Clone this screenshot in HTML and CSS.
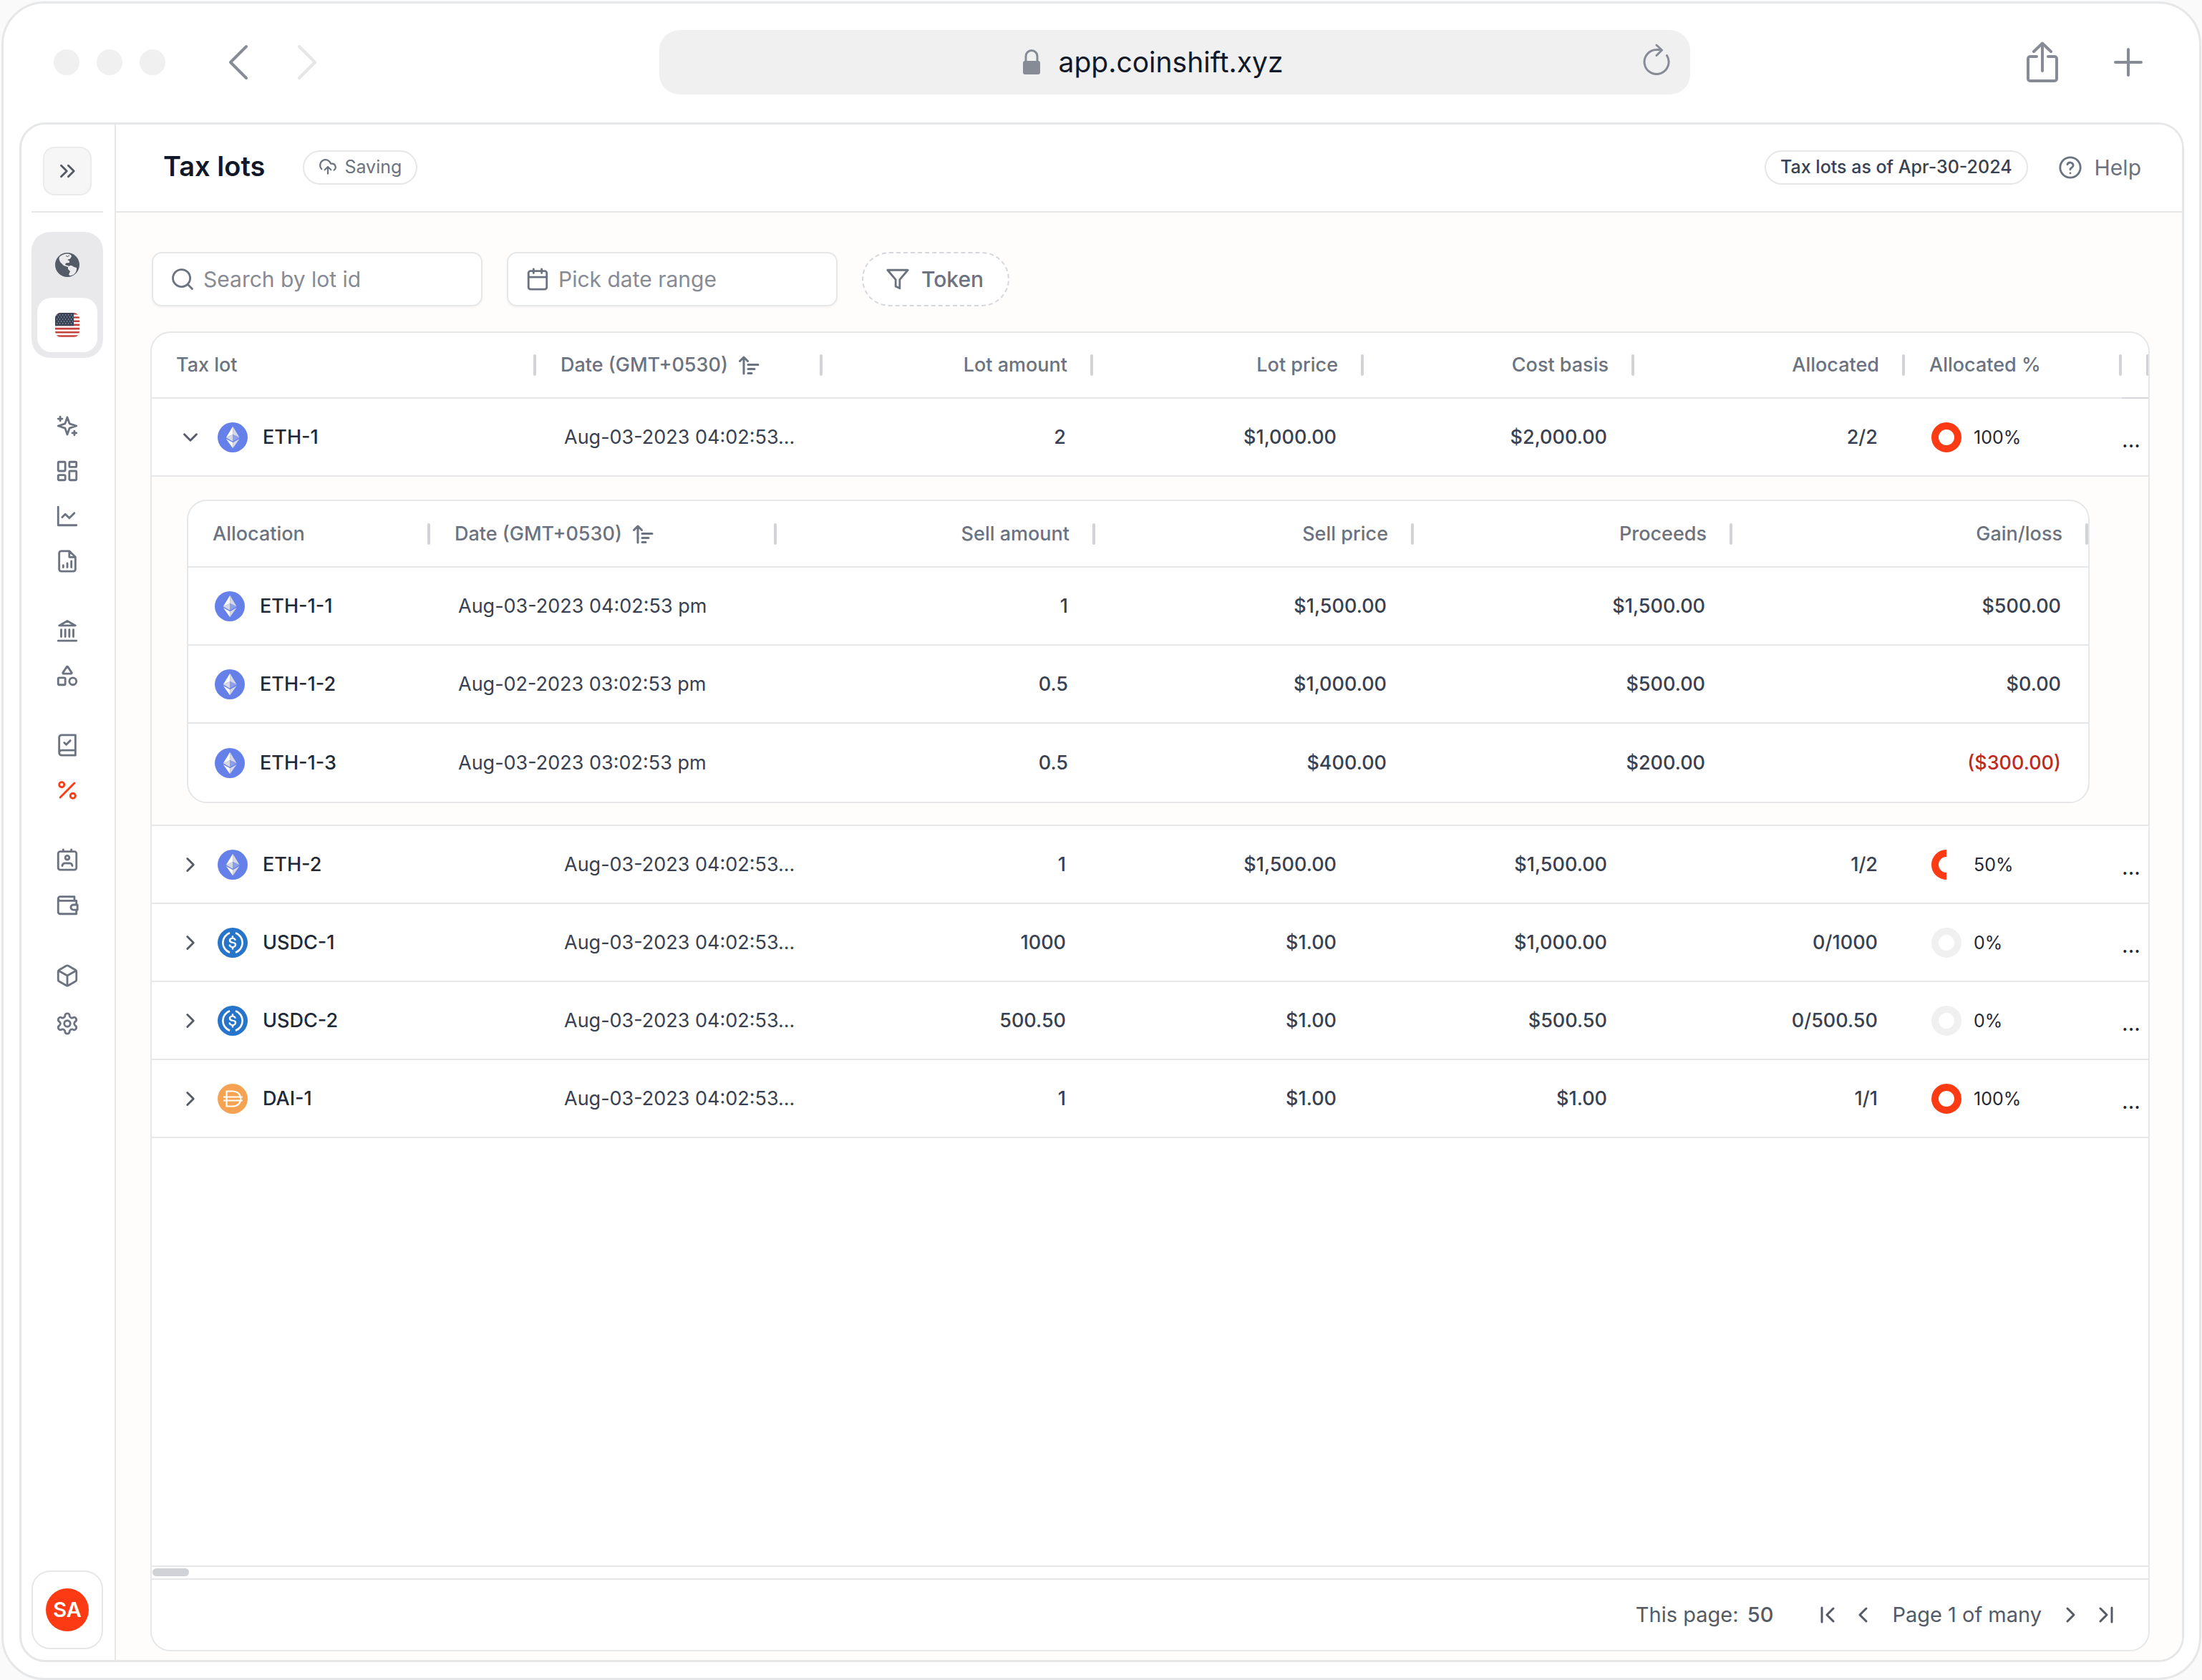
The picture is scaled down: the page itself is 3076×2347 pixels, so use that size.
FILE: index.html
```html
<!DOCTYPE html>
<html lang="en">
<head>
<meta charset="utf-8">
<meta name="viewport" content="width=device-width, initial-scale=1">
<title>Tax lots</title>
<link rel="stylesheet" href="styles.css">
</head>
<body>
<svg class="sprite" aria-hidden="true">
  <symbol id="eth" viewBox="0 0 32 32">
    <circle cx="16" cy="16" r="16" fill="#6680e9"/>
    <path fill="#fff" d="M16.2 4.400 9 16.200l7.200-3.300zM16.200 27.600v-6L9 17.500z"/>
    <path fill="#d5d8e6" d="M16.200 4.400v8.500l7.100 3.300zM16.200 27.600v-6l7.100-4.100zM9 16.200l7.200 4.200v-7.500z"/>
    <path fill="#8f9fe9" d="m16.200 20.400 7.100-4.200-7.100-3.300z"/>
  </symbol>
  <symbol id="usdc" viewBox="0 0 32 32">
    <circle cx="16" cy="16" r="16" fill="#2775ca"/>
    <path fill="#fff" d="M20.022 18.124c0-2.124-1.28-2.852-3.84-3.156-1.828-.243-2.193-.728-2.193-1.578 0-.85.61-1.396 1.828-1.396 1.097 0 1.707.364 2.011 1.275a.458.458 0 00.427.303h.975a.416.416 0 00.427-.425v-.06a3.04 3.04 0 00-2.743-2.489V9.142c0-.243-.183-.425-.487-.486h-.915c-.243 0-.426.182-.487.486v1.396c-1.829.242-2.986 1.456-2.986 2.974 0 2.002 1.218 2.791 3.778 3.095 1.707.303 2.255.668 2.255 1.639 0 .97-.853 1.638-2.011 1.638-1.585 0-2.133-.667-2.316-1.578-.06-.242-.244-.364-.427-.364h-1.036a.416.416 0 00-.426.425v.06c.243 1.518 1.219 2.610 3.230 2.914v1.457c0 .242.183.425.487.485h.915c.243 0 .426-.182.487-.485V21.340c1.829-.303 3.047-1.578 3.047-3.217z"/>
    <path fill="none" stroke="#fff" stroke-width="2" d="M13 5.600a11 11 0 0 0 0 20.800M19 5.600a11 11 0 0 1 0 20.800"/>
  </symbol>
  <symbol id="dai" viewBox="0 0 32 32">
    <circle cx="16" cy="16" r="16" fill="#f5a352"/>
    <path fill="none" stroke="#fff" stroke-width="1.700" d="M9.500 8h6.500c5.500 0 8.500 3.500 8.500 8s-3 8-8.500 8H9.500zM6.200 14.100h20.300M6.200 17.900h20.300"/>
  </symbol>
  <symbol id="chev-right" viewBox="0 0 24 24"><path d="m9 6 6 6-6 6"/></symbol>
  <symbol id="chev-down" viewBox="0 0 24 24"><path d="m6 9 6 6 6-6"/></symbol>
  <symbol id="sort" viewBox="0 0 30 28"><path d="M8 26V3M2.500 8.500 8 3l5.500 5.500M14 13.500h14M14 19.500h9M14 25.500h5"/></symbol>
  <symbol id="ring-full" viewBox="0 0 42 42"><circle cx="21" cy="21" r="16" fill="none" stroke="#fc3b14" stroke-width="10"/></symbol>
  <symbol id="ring-half" viewBox="0 0 42 42"><path d="M21 5a16 16 0 0 0 0 32" fill="none" stroke="#fc3b14" stroke-width="10"/></symbol>
  <symbol id="ring-none" viewBox="0 0 42 42"><circle cx="21" cy="21" r="16" fill="none" stroke="#f0f0f0" stroke-width="10"/></symbol>
</svg>

<div class="window">
  <header class="chrome">
    <div class="chrome-side">
      <div class="lights"><span></span><span></span><span></span></div>
      <button class="bare" aria-label="Back"><svg class="nav-arrow" viewBox="0 0 28 50"><path d="M25 3 3 25l22 22"/></svg></button>
      <button class="bare" aria-label="Forward" disabled><svg class="nav-arrow" viewBox="0 0 28 50"><path d="m3 3 22 22L3 47"/></svg></button>
    </div>
    <div class="address">
      <svg class="lock" viewBox="0 0 26 36"><path d="M5 17V9.500a8 8 0 0 1 16 0V17" fill="none" stroke="#868b95" stroke-width="3"/><rect x="1" y="16" width="24" height="19" rx="3" fill="#868b95"/></svg>
      <span>app.coinshift.xyz</span>
      <button class="bare reload" aria-label="Reload"><svg viewBox="0 0 38 44"><path d="M33.500 16.500A17 17 0 1 1 19 8.500h6M19 2l7.500 7-7.500 7.500"/></svg></button>
    </div>
    <div class="chrome-side end">
      <button class="bare" aria-label="Share"><svg class="share" viewBox="0 0 44 58"><path d="M14 21H5a3 3 0 0 0-3 3v28a3 3 0 0 0 3 3h34a3 3 0 0 0 3-3V24a3 3 0 0 0-3-3h-9M22 41V3M10 14 22 2.500 34 14"/></svg></button>
      <button class="bare" aria-label="New tab"><svg class="plus" viewBox="0 0 40 40"><path d="M20 2v36M2 20h36"/></svg></button>
    </div>
  </header>

  <div class="app">
    <aside class="sidebar">
      <div class="side-top">
        <button class="collapse" aria-label="Expand menu"><svg class="icon" viewBox="0 0 24 24"><path d="m6 17.500 5.500-5.500L6 6.500M13 17.500l5.500-5.500L13 6.500"/></svg></button>
      </div>
      <div class="switcher">
        <button class="bare" aria-label="Global"><svg viewBox="0 0 34 34"><circle cx="17" cy="17" r="17" fill="#545b66"/><path fill="#ebebed" d="M6 6c3-3 7-4.500 11-4.500 3 0 5.500 1.500 6 3.500l-2 3.500-4 1.500 3 1.500v2.500l-5 .5-1 2.500 5 1.500-1 1.500-6-2-5-5-1.500-4zM18 20c2-2 4-2.500 6-1.500 1.500 1 3 2 6 2.500.5 3-1 7-3.500 9-2 1.500-4 2-6 2L19 30.500l2-4.500-3-3z"/><path stroke="#545b66" stroke-width="1" d="m15 4 2 1.500L20 4"/></svg></button>
        <button class="bare active" aria-label="United States"><svg viewBox="0 0 34 34"><defs><clipPath id="flag-clip"><rect width="34" height="34" rx="8"/></clipPath></defs><g clip-path="url(#flag-clip)"><rect width="34" height="34" fill="#fff"/><path stroke="#c8403a" stroke-width="2.600" d="M0 1.300h34M0 6.500h34M0 11.700h34M0 16.900h34M0 22.100h34M0 27.300h34M0 32.500h34"/><rect width="26" height="18.200" fill="#394457"/><path stroke="#c3c7cf" stroke-width="1.200" stroke-dasharray="1.200 2.800" d="M2 3h23M4 6h21M2 9h23M4 12h21M2 15h23"/></g></svg></button>
      </div>
      <nav class="menu" aria-label="Main">
        <div class="menu-group">
          <a href="#" aria-label="Assistant"><svg class="icon" viewBox="0 0 24 24"><path d="M12 3.500 9.800 9.800 3 12l6.800 2.200L12 20.500l2.200-6.300L21 12l-6.800-2.200zM5 3v4M3 5h4M19 17v4M17 19h4"/></svg></a>
          <a href="#" aria-label="Dashboard"><svg class="icon" viewBox="0 0 24 24"><rect x="3" y="3" width="7" height="9" rx="1"/><rect x="14" y="3" width="7" height="5" rx="1"/><rect x="14" y="12" width="7" height="9" rx="1"/><rect x="3" y="16" width="7" height="5" rx="1"/></svg></a>
          <a href="#" aria-label="Analytics"><svg class="icon" viewBox="0 0 24 24"><path d="M3 3v18h18M7 13l3-3 4 4 5-5"/></svg></a>
          <a href="#" aria-label="Reports"><svg class="icon" viewBox="0 0 24 24"><path d="M14 2H6a2 2 0 0 0-2 2v16a2 2 0 0 0 2 2h12a2 2 0 0 0 2-2V8zM14 2v6h6M8 18v-2M12 18v-4M16 18v-6"/></svg></a>
        </div>
        <div class="menu-group">
          <a href="#" aria-label="Treasury"><svg class="icon" viewBox="0 0 24 24"><path d="M3 22h18M6 18v-7M10 18v-7M14 18v-7M18 18v-7M12 2.500l8 4.500H4z"/></svg></a>
          <a href="#" aria-label="Assets"><svg class="icon" viewBox="0 0 24 24"><path d="M8.300 10a.7.7 0 0 1-.6-1.100l3.700-5.600a.7.7 0 0 1 1.200 0l3.700 5.600a.7.7 0 0 1-.6 1.100z"/><rect x="3" y="14" width="7" height="7" rx="1"/><circle cx="17.500" cy="17.500" r="3.500"/></svg></a>
        </div>
        <div class="menu-group">
          <a href="#" aria-label="Accounting"><svg class="icon" viewBox="0 0 24 24"><path d="M4 19.500v-15A2.500 2.500 0 0 1 6.500 2H20v20H6.500a2.500 2.500 0 0 1 0-5H20M9 9.500l2 2 4-4"/></svg></a>
          <a href="#" class="current" aria-label="Tax lots" aria-current="page"><svg class="icon" viewBox="0 0 24 24"><path d="M19 5 5 19"/><circle cx="6.500" cy="6.500" r="2.500"/><circle cx="17.500" cy="17.500" r="2.500"/></svg></a>
        </div>
        <div class="menu-group">
          <a href="#" aria-label="Contacts"><svg class="icon" viewBox="0 0 24 24"><path d="M8 2v2M16 2v2M7 18a3 3 0 0 1 3-2.500h4a3 3 0 0 1 3 2.500"/><rect x="3" y="4" width="18" height="18" rx="2"/><circle cx="12" cy="10" r="2"/></svg></a>
          <a href="#" aria-label="Wallets"><svg class="icon" viewBox="0 0 24 24"><path d="M19 7V4H5a2 2 0 0 0 0 4h16v4M3 6v13a2 2 0 0 0 2 2h16v-4M18 12a2 2 0 0 0 0 5h4v-5z"/></svg></a>
        </div>
        <div class="menu-group wide">
          <a href="#" aria-label="Integrations"><svg class="icon" viewBox="0 0 24 24"><path d="M21 8a2 2 0 0 0-1-1.700l-7-4a2 2 0 0 0-2 0l-7 4A2 2 0 0 0 3 8v8a2 2 0 0 0 1 1.700l7 4a2 2 0 0 0 2 0l7-4a2 2 0 0 0 1-1.700zM3.300 7l8.700 5 8.700-5M12 22V12"/></svg></a>
          <a href="#" aria-label="Settings"><svg class="icon" viewBox="0 0 24 24"><path d="M12.220 2h-.44a2 2 0 0 0-2 2v.18a2 2 0 0 1-1 1.730l-.43.25a2 2 0 0 1-2 0l-.15-.08a2 2 0 0 0-2.730.73l-.22.38a2 2 0 0 0 .73 2.730l.15.1a2 2 0 0 1 1 1.720v.51a2 2 0 0 1-1 1.740l-.15.09a2 2 0 0 0-.73 2.730l.22.38a2 2 0 0 0 2.730.73l.15-.08a2 2 0 0 1 2 0l.43.25a2 2 0 0 1 1 1.730V20a2 2 0 0 0 2 2h.44a2 2 0 0 0 2-2v-.18a2 2 0 0 1 1-1.730l.43-.25a2 2 0 0 1 2 0l.15.08a2 2 0 0 0 2.730-.73l.22-.39a2 2 0 0 0-.73-2.730l-.15-.08a2 2 0 0 1-1-1.740v-.5a2 2 0 0 1 1-1.740l.15-.09a2 2 0 0 0 .73-2.730l-.22-.38a2 2 0 0 0-2.730-.73l-.15.08a2 2 0 0 1-2 0l-.43-.25a2 2 0 0 1-1-1.730V4a2 2 0 0 0-2-2z"/><circle cx="12" cy="12" r="3"/></svg></a>
        </div>
      </nav>
      <button class="account" aria-label="Account"><span>SA</span></button>
    </aside>

    <main class="main">
      <div class="page-head">
        <h1>Tax lots</h1>
        <span class="pill saving"><svg viewBox="0 0 24 24"><path d="M4 14.900A7 7 0 1 1 15.700 8h1.800a4.500 4.500 0 0 1 2.500 8.200M12 12v9M8 16l4-4 4 4"/></svg>Saving</span>
        <span class="pill as-of">Tax lots as of Apr-30-2024</span>
        <a class="help" href="#"><svg class="icon" viewBox="0 0 24 24"><circle cx="12" cy="12" r="10"/><path d="M9.100 9a3 3 0 0 1 5.800 1c0 2-3 2.500-3 4M12 17.500v.1"/></svg>Help</a>
      </div>

      <div class="content">
        <div class="filters">
          <label class="field"><svg class="icon" viewBox="0 0 24 24"><circle cx="11" cy="11" r="8.500"/><path d="m21.500 21.500-4.400-4.400"/></svg><input type="text" placeholder="Search by lot id" aria-label="Search by lot id"></label>
          <label class="field"><svg class="icon" viewBox="0 0 24 24"><rect x="3" y="4" width="18" height="18" rx="2"/><path d="M8 2v4M16 2v4M3 10h18"/></svg><input type="text" placeholder="Pick date range" aria-label="Pick date range"></label>
          <button class="token"><svg class="icon" viewBox="0 0 24 24"><path d="M22 3H2l8 9.500V19l4 2v-8.500z"/></svg>Token</button>
        </div>

        <section class="card">
          <div class="table-scroll">
            <table class="lots">
              <colgroup><col><col class="c-date"><col class="c-num"><col class="c-num"><col class="c-num"><col class="c-num"><col class="c-pct"><col class="c-more"></colgroup>
              <thead>
                <tr>
                  <th><div class="th">Tax lot</div></th>
                  <th><div class="th">Date (GMT+0530)<svg class="sort"><use href="#sort"/></svg></div></th>
                  <th><div class="th num">Lot amount</div></th>
                  <th><div class="th num">Lot price</div></th>
                  <th><div class="th num">Cost basis</div></th>
                  <th><div class="th num">Allocated</div></th>
                  <th><div class="th">Allocated %</div></th>
                  <th class="more-head"><div class="th"></div></th>
                </tr>
              </thead>
              <tbody>
                <tr>
                  <td><div class="lot"><button class="bare" aria-label="Collapse ETH-1"><svg class="icon"><use href="#chev-down"/></svg></button><svg class="coin"><use href="#eth"/></svg>ETH-1</div></td>
                  <td class="date">Aug-03-2023 04:02:53...</td><td class="num">2</td><td class="num">$1,000.00</td><td class="num">$2,000.00</td><td class="num">2/2</td>
                  <td><div class="pct"><svg class="coin"><use href="#ring-full"/></svg>100%</div></td>
                  <td><button class="bare more" aria-label="More">...</button></td>
                </tr>
                <tr class="detail">
                  <td colspan="8">
                    <div class="sub-card">
                      <table>
                        <colgroup><col><col class="s-date"><col class="s-num"><col class="s-num"><col class="s-num"><col class="s-last"></colgroup>
                        <thead>
                          <tr>
                            <th><div class="th">Allocation</div></th>
                            <th><div class="th">Date (GMT+0530)<svg class="sort"><use href="#sort"/></svg></div></th>
                            <th><div class="th num">Sell amount</div></th>
                            <th><div class="th num">Sell price</div></th>
                            <th><div class="th num">Proceeds</div></th>
                            <th><div class="th num">Gain/loss</div></th>
                          </tr>
                        </thead>
                        <tbody>
                          <tr><td><div class="lot"><svg class="coin"><use href="#eth"/></svg>ETH-1-1</div></td><td class="date">Aug-03-2023 04:02:53 pm</td><td class="num">1</td><td class="num">$1,500.00</td><td class="num">$1,500.00</td><td class="num">$500.00</td></tr>
                          <tr><td><div class="lot"><svg class="coin"><use href="#eth"/></svg>ETH-1-2</div></td><td class="date">Aug-02-2023 03:02:53 pm</td><td class="num">0.5</td><td class="num">$1,000.00</td><td class="num">$500.00</td><td class="num">$0.00</td></tr>
                          <tr><td><div class="lot"><svg class="coin"><use href="#eth"/></svg>ETH-1-3</div></td><td class="date">Aug-03-2023 03:02:53 pm</td><td class="num">0.5</td><td class="num">$400.00</td><td class="num">$200.00</td><td class="num loss">($300.00)</td></tr>
                        </tbody>
                      </table>
                    </div>
                  </td>
                </tr>
                <tr>
                  <td><div class="lot"><button class="bare" aria-label="Expand ETH-2"><svg class="icon"><use href="#chev-right"/></svg></button><svg class="coin"><use href="#eth"/></svg>ETH-2</div></td>
                  <td class="date">Aug-03-2023 04:02:53...</td><td class="num">1</td><td class="num">$1,500.00</td><td class="num">$1,500.00</td><td class="num">1/2</td>
                  <td><div class="pct"><svg class="coin"><use href="#ring-half"/></svg>50%</div></td>
                  <td><button class="bare more" aria-label="More">...</button></td>
                </tr>
                <tr>
                  <td><div class="lot"><button class="bare" aria-label="Expand USDC-1"><svg class="icon"><use href="#chev-right"/></svg></button><svg class="coin"><use href="#usdc"/></svg>USDC-1</div></td>
                  <td class="date">Aug-03-2023 04:02:53...</td><td class="num">1000</td><td class="num">$1.00</td><td class="num">$1,000.00</td><td class="num">0/1000</td>
                  <td><div class="pct"><svg class="coin"><use href="#ring-none"/></svg>0%</div></td>
                  <td><button class="bare more" aria-label="More">...</button></td>
                </tr>
                <tr>
                  <td><div class="lot"><button class="bare" aria-label="Expand USDC-2"><svg class="icon"><use href="#chev-right"/></svg></button><svg class="coin"><use href="#usdc"/></svg>USDC-2</div></td>
                  <td class="date">Aug-03-2023 04:02:53...</td><td class="num">500.50</td><td class="num">$1.00</td><td class="num">$500.50</td><td class="num">0/500.50</td>
                  <td><div class="pct"><svg class="coin"><use href="#ring-none"/></svg>0%</div></td>
                  <td><button class="bare more" aria-label="More">...</button></td>
                </tr>
                <tr>
                  <td><div class="lot"><button class="bare" aria-label="Expand DAI-1"><svg class="icon"><use href="#chev-right"/></svg></button><svg class="coin"><use href="#dai"/></svg>DAI-1</div></td>
                  <td class="date">Aug-03-2023 04:02:53...</td><td class="num">1</td><td class="num">$1.00</td><td class="num">$1.00</td><td class="num">1/1</td>
                  <td><div class="pct"><svg class="coin"><use href="#ring-full"/></svg>100%</div></td>
                  <td><button class="bare more" aria-label="More">...</button></td>
                </tr>
              </tbody>
            </table>
          </div>
          <div class="track"><div class="thumb"></div></div>
          <footer class="pager">
            <p class="page-size">This page: <strong>50</strong></p>
            <div class="pages">
              <button class="bare" aria-label="First page"><svg viewBox="0 0 20 24"><path d="M2 2v20M18 3 9 12l9 9"/></svg></button>
              <button class="bare" aria-label="Previous page"><svg viewBox="0 0 20 24"><path d="m14 3-9 9 9 9"/></svg></button>
              <span>Page 1 of many</span>
              <button class="bare" aria-label="Next page"><svg viewBox="0 0 20 24"><path d="m6 3 9 9-9 9"/></svg></button>
              <button class="bare" aria-label="Last page"><svg viewBox="0 0 20 24"><path d="M18 2v20M2 3l9 9-9 9"/></svg></button>
            </div>
          </footer>
        </section>
      </div>
    </main>
  </div>
</div>
</body>
</html>
```
FILE: styles.css
```css
:root {
  --line: #e6e7e9;
  --muted: #6b7280;
  --text: #374151;
  --strong: #1f2937;
  --grey: #868b95;
  --accent: #fc3b14;
  --paper: #fefdfb;
}

*, *::before, *::after { box-sizing: border-box; }

body {
  margin: 0;
  min-height: 100vh;
  padding: 2px 1px 0 2px;
  display: flex;
  background: #fafafa;
  font-family: Inter, "Liberation Sans", sans-serif;
  font-size: 27px;
  line-height: 36px;
  color: var(--text);
}

h1, p { margin: 0; }
button, input { font: inherit; color: inherit; }
svg { display: block; fill: none; flex: none; }

.sprite { position: absolute; width: 0; height: 0; }

.bare {
  border: 0;
  padding: 0;
  background: none;
  cursor: pointer;
}

.icon {
  width: 34px;
  height: 34px;
  stroke: currentColor;
  stroke-width: 2;
  stroke-linecap: round;
  stroke-linejoin: round;
}

/* Browser window */
.window {
  flex: 1;
  min-width: 0;
  display: flex;
  flex-direction: column;
  padding: 0 21px 22px 22px;
  border: 3px solid var(--line);
  border-radius: 60px;
  background: #fff;
}

.chrome {
  height: 166px;
  display: grid;
  grid-template-columns: 894fr 1440fr 690fr;
  align-items: center;
  padding-bottom: 2px;
  color: var(--grey);
}

.chrome-side {
  display: flex;
  align-items: center;
  gap: 68px;
  padding-left: 48px;
}
.chrome-side.end {
  justify-content: flex-end;
  gap: 78px;
  padding: 0 58px 0 0;
}

.lights { display: flex; gap: 24px; margin-right: 20px; }
.lights span { width: 36px; height: 36px; border-radius: 50%; background: #f0f0f0; }

.chrome svg {
  stroke: currentColor;
  stroke-width: 4;
  stroke-linecap: round;
  stroke-linejoin: round;
}
.chrome [disabled] { color: #e5e6e8; }
.nav-arrow { width: 28px; height: 50px; }
.share { width: 44px; height: 58px; }
.plus { width: 40px; height: 40px; }

.address {
  position: relative;
  height: 90px;
  display: flex;
  align-items: center;
  justify-content: center;
  gap: 25px;
  padding-right: 62px;
  border-radius: 28px;
  background: #f0f0f0;
  font-size: 39px;
  line-height: 48px;
  color: #111827;
}
.address .lock { width: 26px; height: 36px; stroke: none; }
.reload { position: absolute; right: 28px; padding-bottom: 8px; color: var(--grey); }
.reload svg { width: 38px; height: 44px; stroke-width: 3; }

/* Application frame */
.app {
  flex: 1;
  display: flex;
  border: 3px solid var(--line);
  border-radius: 36px;
  overflow: hidden;
}

.sidebar {
  width: 132px;
  flex: none;
  display: flex;
  flex-direction: column;
  padding: 0 16px 15px 14px;
  border-right: 2px solid var(--line);
  color: var(--muted);
}

.side-top {
  height: 123px;
  display: flex;
  justify-content: center;
  align-items: center;
  padding: 12px 0 4px;
  border-bottom: 2px solid var(--line);
}

.collapse {
  width: 68px;
  height: 68px;
  padding: 0;
  display: grid;
  place-items: center;
  border: 2px solid #ebebec;
  border-radius: 16px;
  background: #f6f6f6;
  color: #545b66;
}

.switcher {
  margin-top: 27px;
  padding: 8px;
  display: grid;
  gap: 8px;
  border-radius: 26px;
  background: #e9e9eb;
}
.switcher button {
  height: 76px;
  display: grid;
  place-items: center;
  border-radius: 20px;
}
.switcher .active { background: #fff; }
.switcher svg { width: 34px; height: 34px; }

.menu {
  margin: 63px 0 auto;
  display: grid;
  gap: 34px;
}
.menu a {
  height: 63px;
  display: grid;
  place-items: center;
  color: inherit;
}
.menu .wide a { height: 67px; }
.menu .current { color: var(--accent); }

.account {
  height: 110px;
  padding: 0;
  display: grid;
  place-items: center;
  border: 2px solid var(--line);
  border-radius: 26px;
  background: #fff;
}
.account span {
  width: 60px;
  height: 60px;
  display: grid;
  place-items: center;
  border-radius: 50%;
  background: var(--accent);
  color: #fff;
  font-size: 29px;
  font-weight: 600;
}

/* Page */
.main {
  flex: 1;
  min-width: 0;
  display: flex;
  flex-direction: column;
  background: var(--paper);
}

.page-head {
  height: 123px;
  display: flex;
  align-items: center;
  padding: 0 57px 2px 66px;
  border-bottom: 2px solid var(--line);
  background: #fff;
}
.page-head h1 {
  padding-bottom: 4px;
  font-size: 38px;
  line-height: 48px;
  font-weight: 600;
  color: #111827;
}

.pill {
  height: 48px;
  display: flex;
  align-items: center;
  gap: 10px;
  padding: 0 20px 2px;
  border: 2px solid var(--line);
  border-radius: 24px;
  font-size: 25px;
  font-weight: 500;
}
.saving { margin-left: 53px; color: var(--muted); font-weight: 400; }
.saving svg {
  width: 26px;
  height: 26px;
  stroke: currentColor;
  stroke-width: 2;
  stroke-linecap: round;
  stroke-linejoin: round;
}
.as-of { margin-left: auto; }

.help {
  display: flex;
  align-items: center;
  gap: 17px;
  margin-left: 42px;
  font-size: 30px;
  color: var(--muted);
  text-decoration: none;
}

.content {
  flex: 1;
  display: flex;
  flex-direction: column;
  gap: 35px;
  padding: 55px 45px 12px 48px;
}

.filters { display: flex; gap: 34px; padding: 0 2px; font-size: 30px; }
.field, .token {
  height: 76px;
  display: flex;
  align-items: center;
  border: 2px solid var(--line);
  background: #fff;
  color: var(--muted);
}
.field {
  width: 462px;
  gap: 12px;
  padding: 0 24px;
  border-radius: 14px;
  box-shadow: 0 2px 3px rgba(17, 24, 39, .04);
}
.field input {
  flex: 1;
  min-width: 0;
  border: 0;
  padding: 0;
  outline: 0;
  background: none;
}
.field input::placeholder { color: var(--grey); opacity: 1; }
.token {
  gap: 16px;
  padding: 0 34px 0 31px;
  border: 2px dashed #d5d7dc;
  border-radius: 38px;
  font-weight: 500;
}

/* Table card */
.card {
  flex: 1;
  display: flex;
  flex-direction: column;
  border: 2px solid var(--line);
  border-radius: 28px;
  background: #fff;
  overflow: hidden;
}
.table-scroll { flex: 1; overflow: hidden; }

table {
  width: 100%;
  table-layout: fixed;
  border-collapse: separate;
  border-spacing: 0;
}
.c-date { width: 400px; }
.c-num { width: 378px; }
.c-pct { width: 303px; }
.c-more { width: 37px; }
.s-date { width: 484px; }
.s-num { width: 445px; }
.s-last { width: 497px; }

th {
  height: 92px;
  padding: 0;
  border-bottom: 2px solid var(--line);
  font-weight: 500;
  color: var(--muted);
  text-align: left;
}
.th {
  display: flex;
  align-items: center;
  padding-left: 34px;
  white-space: nowrap;
}
.th::after {
  content: "";
  width: 4px;
  height: 30px;
  flex: none;
  margin-left: auto;
  border-radius: 2px;
  background: #d2d3d9;
}
.th.num { justify-content: flex-end; }
.th.num::after { margin-left: 32px; }
.more-head { border-color: #d5d6d9; }
.sort {
  width: 30px;
  height: 28px;
  margin-left: 14px;
  stroke: currentColor;
  stroke-width: 3;
  stroke-linecap: round;
  stroke-linejoin: round;
}

td {
  height: 109px;
  padding: 0;
  border-bottom: 2px solid var(--line);
  white-space: nowrap;
}
td.num { padding-right: 38px; text-align: right; font-weight: 500; }
td.date { padding-left: 39px; }
td.loss { color: #c02a1d; }

.lot {
  display: flex;
  align-items: center;
  gap: 21px;
  padding-left: 37px;
  font-weight: 500;
  color: var(--strong);
}
.lot .icon { color: #545b66; }
.coin { width: 42px; height: 42px; }
.pct {
  display: flex;
  align-items: center;
  gap: 17px;
  padding-left: 37px;
  font-size: 25px;
  color: var(--strong);
}
.more { display: block; padding-top: 6px; font-size: 30px; color: var(--strong); }

.detail > td { height: auto; padding: 32px 82px 30px 49px; background: var(--paper); }
.sub-card {
  border: 2px solid var(--line);
  border-radius: 28px;
  background: #fff;
  overflow: hidden;
}
.sub-card th { height: 93px; }
.sub-card tr:last-child td { border-bottom: 0; }

.track {
  height: 20px;
  padding: 2px 1px;
  border-top: 2px solid var(--line);
  border-bottom: 2px solid var(--line);
}
.thumb { width: 51px; height: 11px; border-radius: 6px; background: #d1d2d8; }

.pager {
  height: 98px;
  display: flex;
  align-items: center;
  justify-content: flex-end;
  gap: 66px;
  padding-right: 49px;
  font-size: 29px;
  color: #545b66;
}
.page-size strong { margin-left: 4px; font-weight: 500; }
.pages { display: flex; align-items: center; gap: 30px; }
.pages svg {
  width: 20px;
  height: 24px;
  stroke: currentColor;
  stroke-width: 3;
  stroke-linecap: round;
  stroke-linejoin: round;
}
```
